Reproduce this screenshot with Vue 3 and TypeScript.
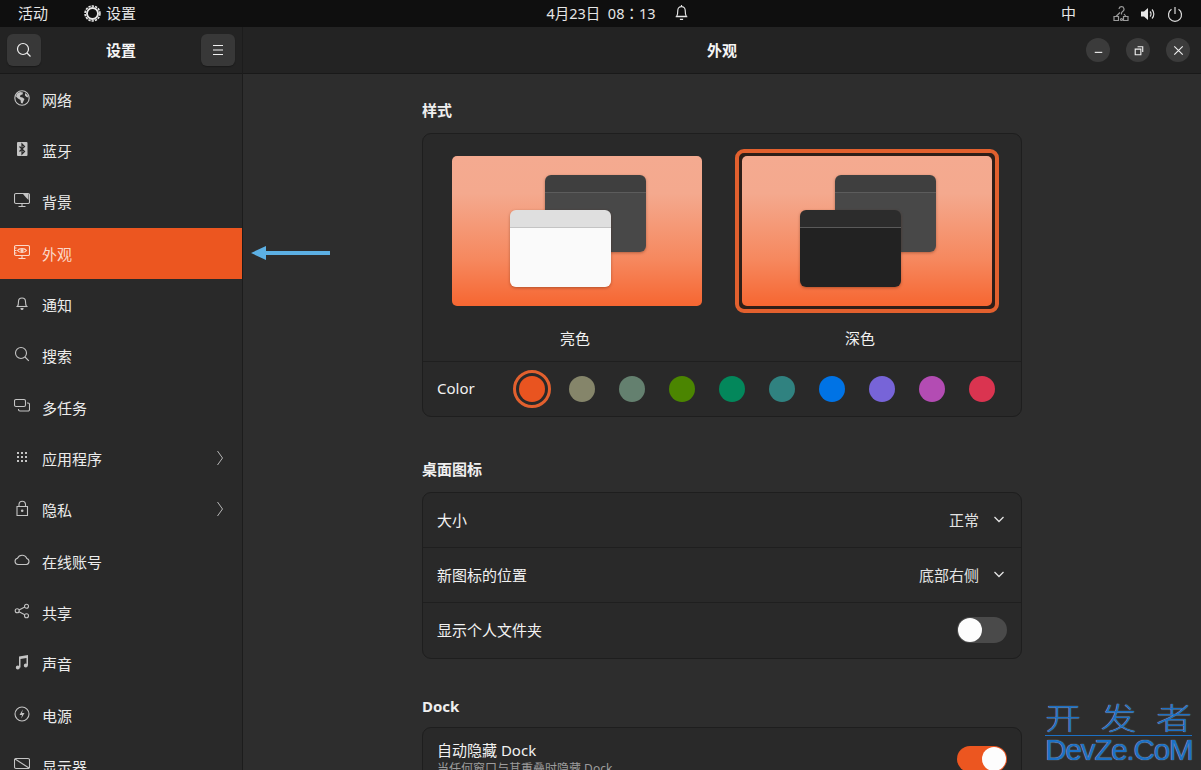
<script setup lang="ts">
interface NavIcon { s?: string[]; f?: string[]; d?: string[] }
interface NavItem { label: string; icon: NavIcon; chevron?: boolean; active?: boolean }

const icons: Record<string, NavIcon> = {
  globe: { s: ['M8 .8a7.2 7.2 0 1 0 0 14.4A7.2 7.2 0 0 0 8 .8z'], f: ['M3 3.500 6 2l3 .5-.5 2-2 .5-.5 2 2.500.5 2 1.500-1 2-1 2.500-1.500-.5-.5-3-2.500-1.500L2 6.500zM11 3l2.500 2 .8 2.500-1.800-.5-1.500-1.500z'] },
  bluetooth: { f: ['M4 1h8.500a1 1 0 0 1 1 1v12a1 1 0 0 1-1 1H4a1 1 0 0 1-1-1V2a1 1 0 0 1 1-1z'], d: ['M5.500 5.500 10.500 10.500 8 13V3l2.500 2.500-5 5'] },
  monitor: { s: ['M2 1.500h12a1.500 1.500 0 0 1 1.500 1.500v7a1.500 1.500 0 0 1-1.500 1.500H2A1.500 1.500 0 0 1 .5 10V3A1.500 1.500 0 0 1 2 1.500z', 'M8 12v2M4.500 14.500h7'], f: ['M9 2h5.500v6L12 5.500z'] },
  appearance: { s: ['M2 1.500h12a1.500 1.500 0 0 1 1.500 1.500v7a1.500 1.500 0 0 1-1.500 1.500H2A1.500 1.500 0 0 1 .5 10V3A1.500 1.500 0 0 1 2 1.500z', 'M8 12v2M4.500 14.500h7', 'M3.500 6.500C5 4 11 4 12.500 6.500 11 9 5 9 3.500 6.500z', 'M.5 4h2M.5 6.500h2M.5 9h2'], f: ['M8 5a1.500 1.500 0 1 0 0 3 1.500 1.500 0 0 0 0-3z'] },
  bell: { s: ['M3.500 11.500c1-1.500 1-3 1-5a3.500 3.500 0 0 1 7 0c0 2 0 3.500 1 5z', 'M2.500 11.500h11'], f: ['M6.500 13h3v.5a1.500 1.500 0 0 1-3 0z'] },
  search: { s: ['M7 1.500a5.500 5.500 0 1 0 0 11 5.500 5.500 0 0 0 0-11z', 'M11 11l3.800 3.800'] },
  multitask: { s: ['M2 1.500h8a1.500 1.500 0 0 1 1.500 1.500v4a1.500 1.500 0 0 1-1.500 1.500H2A1.500 1.500 0 0 1 .5 7V3A1.500 1.500 0 0 1 2 1.500z', 'M13 5h1a1.500 1.500 0 0 1 1.500 1.500v5a1.500 1.500 0 0 1-1.500 1.500H6A1.500 1.500 0 0 1 4.500 11.500V11'] },
  apps: { f: ['M3 3h2v2H3zM7 3h2v2H7zM11 3h2v2h-2zM3 7h2v2H3zM7 7h2v2H7zM11 7h2v2h-2zM3 11h2v2H3zM7 11h2v2H7zM11 11h2v2h-2z'] },
  lock: { s: ['M3 6.500h10.500v9H3z', 'M5 6.500V4a3.300 3.300 0 0 1 6.500 0v2.500'], f: ['M8.200 9.500a1.300 1.300 0 1 0 0 2.600 1.300 1.300 0 0 0 0-2.600z'] },
  cloud: { s: ['M4 12.500a3.200 3.200 0 0 1-.5-6.300A5 5 0 0 1 12.800 6.500 3.100 3.100 0 0 1 12.500 12.500z'] },
  share: { s: ['M3.200 5.800a2 2 0 1 0 0 4 2 2 0 0 0 0-4z', 'M12.500 1.200a2 2 0 1 0 0 4 2 2 0 0 0 0-4z', 'M12.500 10.800a2 2 0 1 0 0 4 2 2 0 0 0 0-4z', 'M5 7 10.800 4M5 8.800l5.800 3'] },
  sound: { f: ['M5 2.500 14 1v10.500h-1.500V4L6.500 5v8.500H5z', 'M3.800 11.500a2 2 0 1 1 0 4 2 2 0 0 1 0-4zM11.800 9.500a2 2 0 1 1 0 4 2 2 0 0 1 0-4z'] },
  power: { s: ['M8 1a7 7 0 1 0 0 14A7 7 0 0 0 8 1z'], f: ['M8.800 3.500 5.500 9H8l-.8 3.500L10.500 7H8z'] },
  display: { s: ['M2 1.500h12a1.500 1.500 0 0 1 1.500 1.500v7a1.500 1.500 0 0 1-1.500 1.500H2A1.500 1.500 0 0 1 .5 10V3A1.500 1.500 0 0 1 2 1.500z', 'M1 2l14 9'] },
}

const nav: NavItem[] = [
  { label: '网络', icon: icons.globe },
  { label: '蓝牙', icon: icons.bluetooth },
  { label: '背景', icon: icons.monitor },
  { label: '外观', icon: icons.appearance, active: true },
  { label: '通知', icon: icons.bell },
  { label: '搜索', icon: icons.search },
  { label: '多任务', icon: icons.multitask },
  { label: '应用程序', icon: icons.apps, chevron: true },
  { label: '隐私', icon: icons.lock, chevron: true },
  { label: '在线账号', icon: icons.cloud },
  { label: '共享', icon: icons.share },
  { label: '声音', icon: icons.sound },
  { label: '电源', icon: icons.power },
  { label: '显示器', icon: icons.display },
]

const colors = ['#e95420', '#85856a', '#64806f', '#4b8501', '#03875b', '#308280', '#0073e5', '#7764d8', '#b34cb3', '#da3450']
</script>

<template>
  <div class="screen">
    <header class="topbar">
      <div class="top-left">
        <span>活动</span>
        <span class="app-name">
          <svg class="gear" viewBox="0 0 16 16"><circle cx="8" cy="8" r="5.200" /><circle class="gear-teeth" cx="8" cy="8" r="7" /></svg>
          设置
        </span>
      </div>
      <div class="top-center">
        <span class="clock">4月23日&nbsp; 08：13</span>
        <svg class="top-bell" viewBox="0 0 16 16"><path d="M3.500 11.500c1-1.500 1-3 1-5.500a3.500 3.500 0 0 1 7 0c0 2.500 0 4 1 5.500zM2.500 12h11M6.500 14.500h3M8 1v1" /></svg>
      </div>
      <div class="top-right">
        <span class="ime">中</span>
        <svg class="tray net" viewBox="0 0 16 16"><path d="M1 10.500h4.500v4H1zM10.500 10.500H15v4h-4.500zM3 10.500 7 6.500M13 10.500 11 8M6 3a2.500 2.500 0 1 1 3.500 2.500L8.500 7v1.500" /><circle cx="8.500" cy="13.500" r="1" /></svg>
        <svg class="tray fillicon" viewBox="0 0 16 16"><path d="M1 5.500h3L8 2v12l-4-3.500H1z" /><path class="wave" d="M10 5.500a3.500 3.500 0 0 1 0 5M12 3.500a6.500 6.500 0 0 1 0 9" /></svg>
        <svg class="tray" viewBox="0 0 16 16"><path d="M8 1v7M4.500 3.300a6.500 6.500 0 1 0 7 0" /></svg>
      </div>
    </header>

    <div class="window">
      <aside class="sidebar">
        <div class="side-head">
          <button class="head-btn" type="button" aria-label="搜索">
            <svg viewBox="0 0 16 16"><path d="M7 1.500a5.500 5.500 0 1 0 0 11 5.500 5.500 0 0 0 0-11zM11 11l3.500 3.500" /></svg>
          </button>
          <span class="head-title">设置</span>
          <button class="head-btn" type="button" aria-label="菜单">
            <svg viewBox="0 0 16 16"><path d="M3 3.500h10M3 8h10M3 12.500h10" /></svg>
          </button>
        </div>
        <nav class="nav">
          <div v-for="item in nav" :key="item.label" class="nav-row" :class="{ active: item.active }">
            <svg class="nav-icon" viewBox="0 0 16 16">
              <path v-for="p in item.icon.f" :key="p" class="ic-fill" :d="p" />
              <path v-for="p in item.icon.s" :key="p" class="ic-stroke" :d="p" />
              <path v-for="p in item.icon.d" :key="p" class="ic-dark" :d="p" />
            </svg>
            <span class="nav-label">{{ item.label }}</span>
            <svg v-if="item.chevron" class="nav-chevron" viewBox="0 0 8 16"><path d="M1.500 1 6.500 8l-5 7" /></svg>
          </div>
        </nav>
      </aside>

      <main class="main">
        <div class="main-head">
          <span class="head-title">外观</span>
          <div class="win-btns">
            <span class="win-btn"><svg viewBox="0 0 16 16"><path d="M4 10h8" /></svg></span>
            <span class="win-btn"><svg viewBox="0 0 16 16"><path d="M4.500 6.500h6v6h-6zM7 4h5.500v5.500" /></svg></span>
            <span class="win-btn"><svg viewBox="0 0 16 16"><path d="M3.500 3.500l9 9M12.500 3.500l-9 9" /></svg></span>
          </div>
        </div>

        <div class="content">
          <section class="group first">
            <h2>样式</h2>
            <div class="card">
              <div class="styles">
                <div class="style-col">
                  <div class="preview-wrap">
                    <div class="preview">
                      <div class="mini back dark-back"></div>
                      <div class="mini front light"></div>
                    </div>
                  </div>
                  <span class="style-name">亮色</span>
                </div>
                <div class="style-col">
                  <div class="preview-wrap selected">
                    <div class="preview">
                      <div class="mini back dark-back"></div>
                      <div class="mini front dark"></div>
                    </div>
                  </div>
                  <span class="style-name right">深色</span>
                </div>
              </div>
              <div class="color-row">
                <span class="color-label">Color</span>
                <div class="swatches">
                  <span v-for="(c, i) in colors" :key="c" class="swatch-cell" :class="{ on: i === 0 }">
                    <span class="swatch" :style="{ background: c }"></span>
                  </span>
                </div>
              </div>
            </div>
          </section>

          <section class="group">
            <h2>桌面图标</h2>
            <div class="card">
              <div class="row">
                <span>大小</span>
                <span class="value">正常<svg class="caret" viewBox="0 0 12 12"><path d="M1.500 4 6 8.500 10.500 4" /></svg></span>
              </div>
              <div class="row">
                <span>新图标的位置</span>
                <span class="value">底部右侧<svg class="caret" viewBox="0 0 12 12"><path d="M1.500 4 6 8.500 10.500 4" /></svg></span>
              </div>
              <div class="row">
                <span>显示个人文件夹</span>
                <span class="toggle"><span class="knob"></span></span>
              </div>
            </div>
          </section>

          <section class="group dock">
            <h2>Dock</h2>
            <div class="card">
              <div class="row tall">
                <div class="two-line">
                  <span>自动隐藏 Dock</span>
                  <span class="sub">当任何窗口与其重叠时隐藏 Dock</span>
                </div>
                <span class="toggle on"><span class="knob"></span></span>
              </div>
            </div>
          </section>
        </div>
      </main>
    </div>

    <svg class="arrow" viewBox="0 0 80 16"><path d="M0 8 15 1v5h64v4H15v5z" /></svg>
    <div class="watermark">
      <div class="wm-cn"><span>开</span><span>发</span><span>者</span></div>
      <div class="wm-en">DevZe.CoM</div>
    </div>
  </div>
</template>

<style>
html, body { margin: 0; background: #2d2d2d; }
</style>

<style scoped>
.screen {
  position: relative;
  width: 1201px;
  height: 770px;
  overflow: hidden;
  display: flex;
  flex-direction: column;
  background: #2d2d2d;
  color: #f2f2f2;
  font-family: "Noto Sans", "Noto Sans CJK SC", sans-serif;
  font-size: 15px;
}
.topbar {
  height: 27px;
  flex: none;
  display: grid;
  grid-template-columns: 1fr auto 1fr;
  align-items: center;
  background: #0f0f0f;
  color: #e6e6e6;
  font-size: 15px;
  line-height: 27px;
}
.top-left { display: flex; align-items: center; gap: 36px; padding-left: 18px; }
.app-name { display: flex; align-items: center; gap: 5px; }
.gear { width: 17px; height: 17px; fill: none; stroke: #e6e6e6; stroke-width: 1.800; }
.gear-teeth { stroke-width: 1.500; stroke-dasharray: 2.200 1; }
.top-center { display: flex; align-items: center; gap: 17px; margin-left: 35px; }
.clock { font-size: 14.500px; font-family: "Noto Sans", "Noto Sans CJK TC", sans-serif; }
.top-bell { width: 17px; height: 19px; fill: none; stroke: #e6e6e6; stroke-width: 1.100; margin-top: -2px; }
.top-right { display: flex; align-items: center; justify-content: flex-end; padding-right: 18px; }
.ime { margin-right: 36px; font-size: 15px; }
.tray { width: 16px; height: 16px; fill: none; stroke: #dddddd; stroke-width: 1.200; margin-left: 11px; }
.net { stroke: #9a9a9a; margin-left: 0; margin-right: 1px; transform: translateX(1px); }
.fillicon path:first-child { fill: #e6e6e6; stroke: none; }
.window { flex: 1; min-height: 0; display: flex; }
.sidebar {
  width: 242px;
  flex: none;
  display: flex;
  flex-direction: column;
  background: #292929;
  border-right: 1px solid #1c1c1c;
}
.side-head, .main-head {
  height: 46px;
  flex: none;
  box-sizing: content-box;
  display: flex;
  align-items: center;
  background: #232323;
  border-bottom: 1px solid #191919;
}
.side-head { justify-content: space-between; padding: 0 7px 0 7px; }
.head-btn {
  width: 34px;
  height: 32px;
  padding: 0;
  border: 0;
  border-radius: 6px;
  background: #383838;
  display: flex;
  align-items: center;
  justify-content: center;
  box-shadow: 0 1px 1px #1a1a1a;
}
.head-btn svg { width: 16px; height: 16px; fill: none; stroke: #f0f0f0; stroke-width: 1.200; margin-top: -1px; }
.head-title { font-weight: 700; font-size: 15px; color: #f5f5f5; margin-top: -1px; margin-bottom: 1px; }
.nav { flex: 1; min-height: 0; overflow: hidden; margin-top: -0.4px; }
.nav-row {
  height: 51.330px;
  box-sizing: border-box;
  display: flex;
  align-items: center;
  padding: 0 18px 0 14px;
  color: #ececec;
}
.nav-row.active { background: #ec5620; color: #fbd9c9; }
.nav-icon { width: 16px; height: 16px; margin-top: -3px; flex: none; }
.ic-stroke { fill: none; stroke: #c4c4c4; stroke-width: 1.100; }
.ic-fill { fill: #c4c4c4; }
.ic-dark { fill: none; stroke: #292929; stroke-width: 1.200; }
.active .ic-stroke { stroke: #fbd9c9; }
.active .ic-fill { fill: #fbd9c9; }
.nav-label { margin-left: 12px; flex: 1; }
.nav-chevron { width: 8px; height: 16px; fill: none; stroke: #b5b5b5; stroke-width: 1; margin-top: -2px; }
.main { flex: 1; min-width: 0; display: flex; flex-direction: column; }
.main-head { position: relative; justify-content: center; }
.win-btns { position: absolute; right: 11px; top: 11px; display: flex; gap: 16px; }
.win-btn {
  width: 24px;
  height: 24px;
  border-radius: 50%;
  background: #3b3b3b;
  display: flex;
  align-items: center;
  justify-content: center;
}
.win-btn svg { width: 15px; height: 15px; fill: none; stroke: #f0f0f0; stroke-width: 1.200; }
.content { flex: 1; min-height: 0; width: 600px; margin: 0 auto; overflow: hidden; }
.group { margin-top: 40px; }
.group.first { margin-top: 24px; }
.group.dock { margin-top: 35px; }
.group.dock h2 { margin-bottom: 9px; }
h2 { margin: 0 0 11px; font-size: 15px; line-height: 24px; font-weight: 700; color: #efefef; }
.card {
  box-sizing: border-box;
  background: #292929;
  border: 1px solid #1e1e1e;
  border-radius: 9px;
}
.styles { display: flex; height: 228px; box-sizing: border-box; border-bottom: 1px solid #1f1f1f; padding: 15px 0 0 22px; gap: 26px; }
.style-col { width: 264px; display: flex; flex-direction: column; align-items: center; }
.preview-wrap {
  box-sizing: border-box;
  width: 264px;
  height: 164px;
  padding: 7px;
  border-radius: 9px;
}
.preview-wrap.selected { border: 4px solid #e2602e; padding: 3px; background: #2e1e18; }
.preview {
  position: relative;
  width: 250px;
  height: 150px;
  border-radius: 5px;
  background: linear-gradient(180deg, #f4aa90 0%, #f4a98e 25%, #f6875d 70%, #f66631 100%);
}
.mini {
  position: absolute;
  width: 101px;
  height: 77px;
  box-sizing: border-box;
  border-radius: 6px;
  box-shadow: 0 1px 3px rgba(80, 30, 10, .4);
}
.back { left: 93px; top: 19px; }
.front { left: 58px; top: 54px; }
.dark-back { background: linear-gradient(#3f3f3f 0, #3f3f3f 17px, #5c5c5c 17px, #5c5c5c 18px, #484848 18px); }
.light { background: linear-gradient(#dfdfdf 0, #dfdfdf 17px, #c4c4c4 17px, #c4c4c4 18px, #fafafa 18px); }
.dark { background: linear-gradient(#2c2c2c 0, #2c2c2c 17px, #5a5a5a 17px, #5a5a5a 18px, #222222 18px); }
.style-name { margin-top: 13px; margin-right: 4px; line-height: 24px; }
.style-name.right { margin-right: 14px; }
.color-row { height: 54px; display: flex; align-items: center; padding-left: 14px; }
.color-label { width: 70px; margin-top: -2px; }
.swatches { display: flex; }
.swatch-cell { width: 50px; display: flex; align-items: center; justify-content: center; position: relative; }
.swatch { width: 26px; height: 26px; border-radius: 50%; display: block; }
.swatch-cell.on::after {
  content: "";
  position: absolute;
  width: 38px;
  height: 38px;
  box-sizing: border-box;
  border: 3px solid #e2602e;
  border-radius: 50%;
}
.row {
  height: 55px;
  box-sizing: border-box;
  display: flex;
  align-items: center;
  justify-content: space-between;
  padding: 0 16px 2px 14px;
  border-bottom: 1px solid #1f1f1f;
}
.row:last-child { border-bottom: 0; }
.value { display: flex; align-items: center; color: #e4e4e4; }
.caret { width: 12px; height: 12px; fill: none; stroke: #e4e4e4; stroke-width: 1.300; margin-left: 14px; }
.toggle {
  position: relative;
  width: 50px;
  height: 26px;
  border-radius: 13px;
  background: #4a4a4a;
  display: block;
  margin-right: -2px;
}
.knob {
  position: absolute;
  left: 1px;
  top: 1px;
  width: 24px;
  height: 24px;
  border-radius: 50%;
  background: #fdfdfd;
}
.toggle.on { background: #ec5620; }
.toggle.on .knob { left: 25px; }
.row.tall { height: 64px; align-items: flex-start; padding-top: 11px; }
.row.tall .toggle { margin-top: 7px; }
.two-line { display: flex; flex-direction: column; line-height: 22px; }
.sub { font-size: 12px; color: #9c9c9c; line-height: 15px; }
.arrow { position: absolute; left: 251px; top: 245px; width: 80px; height: 16px; fill: #5cb0e4; }
.watermark {
  position: absolute;
  left: 1045px;
  top: 702px;
  width: 147px;
  color: #1c70c4;
  text-shadow: 0 0 1px rgba(205, 220, 235, .9);
  font-family: "Liberation Sans", "Noto Sans CJK SC", sans-serif;
}
.wm-cn {
  display: flex;
  justify-content: space-between;
  font-size: 36px;
  line-height: 33px;
  font-weight: 300;
  border-bottom: 1px solid #1c70c4;
}
.wm-cn span { display: block; transform: scaleY(.82); }
.wm-en { font-size: 30px; line-height: 27px; letter-spacing: -1.400px; white-space: nowrap; }
</style>
